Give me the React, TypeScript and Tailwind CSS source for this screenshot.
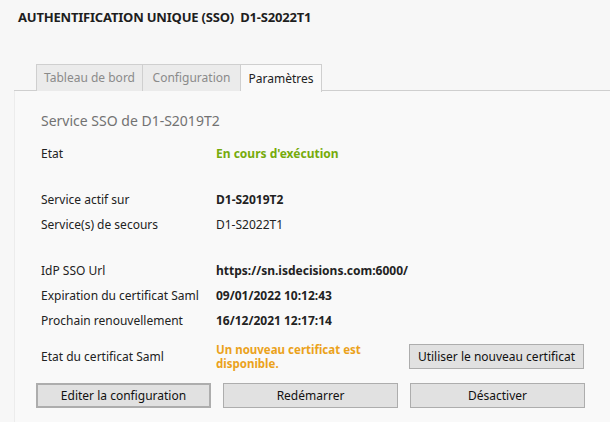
import React from "react";

const Row = ({ label, children, className = "" }: { label: string; children: React.ReactNode; className?: string }) => (
  <div className={`flex items-center h-[25px] ${className}`}>
    <div className="w-[175px] shrink-0">{label}</div>
    <div>{children}</div>
  </div>
);

const Btn = ({ children, focused = false }: { children: React.ReactNode; focused?: boolean }) => (
  <button
    className={`h-[25px] w-[175px] bg-[#e1e1e1] text-[12px] text-[#111] ${
      focused ? "border-2 border-[#adadad]" : "border border-[#adadad]"
    }`}
  >
    {children}
  </button>
);

const App: React.FC = () => {
  return (
    <div
      className="w-[610px] h-[422px] overflow-hidden bg-[#f7f7f7] text-[#222]"
      style={{ fontFamily: '"Noto Sans", "Open Sans", sans-serif' }}
    >
      {/* TITLE */}
      <div className="pl-[18px] pt-[8px] h-[64px]">
        <h1 className="text-[13px] font-bold text-[#1e1e1e] tracking-[-0.2px]">
          AUTHENTIFICATION UNIQUE (SSO)&nbsp;&nbsp;D1-S2022T1
        </h1>
      </div>

      {/* TABS */}
      <div className="ml-[14px] flex pl-[22px] border-b border-[#cfcfcf] h-[27px]">
        <div className="w-[107px] h-[27px] border border-b-0 border-[#cfcfcf] bg-[#ebebeb] text-[#8a8a8a] text-[12px] flex items-center justify-center">
          Tableau de bord
        </div>
        <div className="w-[98px] h-[27px] border border-l-0 border-b-0 border-[#cfcfcf] bg-[#ebebeb] text-[#8a8a8a] text-[12px] flex items-center justify-center">
          Configuration
        </div>
        <div className="w-[81px] h-[28px] border border-l-0 border-b-0 border-[#cfcfcf] bg-[#f9f9f9] text-[#222] text-[12px] flex items-center justify-center">
          Paramètres
        </div>
      </div>

      {/* PANEL */}
      <div className="ml-[14px] h-[331px] bg-[#f9f9f9] border-l border-[#ececec] pl-[26px] pt-[18px] text-[12px] text-[#222]">
        <div className="text-[14px] text-[#727272] h-[24px] leading-[24px]">Service SSO de D1-S2019T2</div>

        <Row label="Etat" className="mt-[8px]">
          <span className="font-bold text-[#76ab0b]">En cours d'exécution</span>
        </Row>

        <Row label="Service actif sur" className="mt-[21px]">
          <span className="font-bold">D1-S2019T2</span>
        </Row>
        <Row label="Service(s) de secours">D1-S2022T1</Row>

        <Row label="IdP SSO Url" className="mt-[21px]">
          <span className="font-bold">https://sn.isdecisions.com:6000/</span>
        </Row>
        <Row label="Expiration du certificat Saml">
          <span className="font-bold">09/01/2022 10:12:43</span>
        </Row>
        <Row label="Prochain renouvellement">
          <span className="font-bold">16/12/2021 12:17:14</span>
        </Row>

        <div className="flex items-center mt-[11px] h-[25px]">
          <div className="w-[175px] shrink-0">Etat du certificat Saml</div>
          <div className="w-[193px] font-bold text-[#eba21b] text-[11.5px] leading-[14px]">
            <div>Un nouveau certificat est</div>
            <div>disponible.</div>
          </div>
          <Btn>Utiliser le nouveau certificat</Btn>
        </div>

        <div className="flex gap-[12px] -ml-[5px] mt-[14px]">
          <Btn focused>Editer la configuration</Btn>
          <Btn>Redémarrer</Btn>
          <Btn>Désactiver</Btn>
        </div>
      </div>
    </div>
  );
};

export default App;
